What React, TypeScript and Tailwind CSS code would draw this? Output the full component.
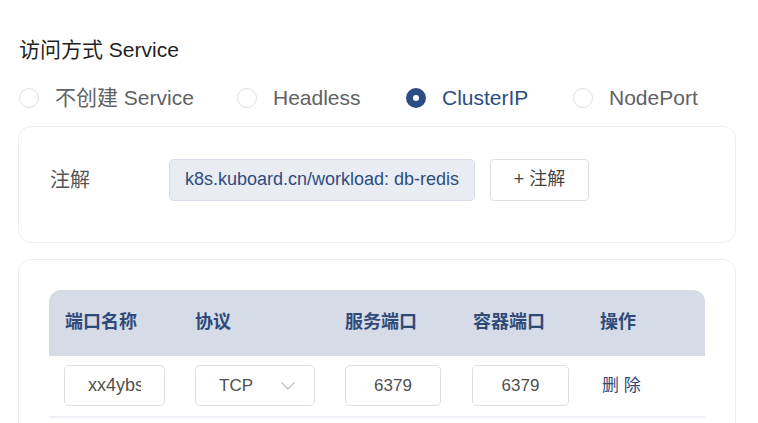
import React from "react";

const font = {
  fontFamily: '"Liberation Sans", Arial, "Noto Sans CJK SC", sans-serif',
};

function Radio({ label, checked }: { label: string; checked?: boolean }) {
  return (
    <label className="flex items-center">
      {checked ? (
        <span className="flex h-[20px] w-[20px] items-center justify-center rounded-full bg-[#2c4d84]">
          <span className="h-[6px] w-[6px] rounded-full bg-white" />
        </span>
      ) : (
        <span className="h-[20px] w-[20px] rounded-full border border-[#dcdfe6] bg-white" />
      )}
      <span
        className={
          "ml-[16px] text-[21px] " + (checked ? "text-[#2c4d84]" : "text-[#606266]")
        }
      >
        {label}
      </span>
    </label>
  );
}

function Field({ value, w }: { value: string; w: string }) {
  return (
    <div
      className={
        "flex h-[41px] items-center justify-center overflow-hidden rounded-[5px] border border-[#dcdfe6] bg-white text-[17px] text-[#505050] " +
        w
      }
    >
      <span className="whitespace-nowrap">{value}</span>
    </div>
  );
}

export default function App() {
  const cols = ["w-[130px]", "w-[150px]", "w-[128px]", "w-[127px]", "flex-1"];
  const heads = ["端口名称", "协议", "服务端口", "容器端口", "操作"];
  return (
    <div className="h-[423px] w-[758px] overflow-hidden bg-white" style={font}>
      <div className="pl-[18px] pr-[22px] pt-[38px]">
        <div className="ml-[1px] text-[21px] leading-[24px] text-[#1f1f1f]">访问方式 Service</div>

        <div className="mt-[20px] flex items-center">
          <div className="w-[219px] pl-[1px]">
            <Radio label="不创建 Service" />
          </div>
          <div className="w-[169px]">
            <Radio label="Headless" />
          </div>
          <div className="w-[167px]">
            <Radio label="ClusterIP" checked />
          </div>
          <Radio label="NodePort" />
        </div>

        <div className="mt-[12px] flex h-[117px] items-start rounded-[13px] border border-[#eceef3] pl-[31px] pt-[32px]">
          <span className="flex h-[42px] w-[119px] items-center text-[20px] text-[#555]">注解</span>
          <div className="flex h-[42px] w-[306px] items-center justify-center rounded-[5px] border border-[#d6dce6] bg-[#e9edf3] text-[18px] text-[#2f4c7e]">
            k8s.kuboard.cn/workload: db-redis
          </div>
          <button className="ml-[15px] h-[42px] w-[99px] rounded-[4px] border border-[#dcdfe6] bg-white text-[18px] text-[#444]">
            + 注解
          </button>
        </div>

        <div className="mt-[16px] h-[200px] rounded-[13px] border border-[#eceef3] px-[30px] pt-[30px]">
          <div className="flex h-[66px] items-center rounded-t-[12px] bg-[#d5dbe7]">
            {heads.map((h, i) => (
              <div key={h} className={cols[i] + " pl-[16px] text-[18px] font-bold text-[#2f4a78]"}>
                {h}
              </div>
            ))}
          </div>
          <div className="flex h-[62px] items-center border-b-2 border-[#edf0f5]">
            <div className={cols[0] + " pl-[15px]"}>
              <div className="flex h-[41px] w-[101px] items-center overflow-hidden rounded-[5px] border border-[#dcdfe6] bg-white px-[23px] text-[18px] text-[#505050]">
                <span className="block w-full overflow-hidden whitespace-nowrap">xx4ybs</span>
              </div>
            </div>
            <div className={cols[1] + " pl-[16px]"}>
              <div className="flex h-[41px] w-[120px] items-center rounded-[5px] border border-[#dcdfe6] pl-[23px] pr-[18px] text-[17px] text-[#505050]">
                <span className="flex-1">TCP</span>
                <svg width="16" height="10" viewBox="0 0 16 10" fill="none">
                  <path d="M1.5 1.5 L8 8 L14.5 1.5" stroke="#c0c4cc" strokeWidth="1.4" />
                </svg>
              </div>
            </div>
            <div className={cols[2] + " pl-[16px]"}>
              <Field value="6379" w="w-[96px]" />
            </div>
            <div className={cols[3] + " pl-[15px]"}>
              <Field value="6379" w="w-[97px]" />
            </div>
            <div className={cols[4] + " pl-[18px] text-[17px] text-[#2f4a78]"}>删 除</div>
          </div>
        </div>
      </div>
    </div>
  );
}
